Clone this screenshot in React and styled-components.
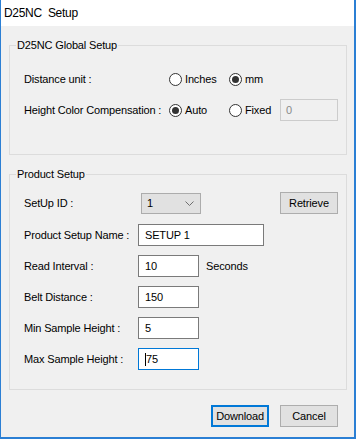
import React from "react";
import styled, { createGlobalStyle } from "styled-components";

const GlobalStyle = createGlobalStyle`
  html, body { margin: 0; padding: 0; background: #f0f0f0; }
  * { box-sizing: border-box; }
`;

const Win = styled.div`
  width: 356px;
  height: 439px;
  display: flex;
  flex-direction: column;
  border-left: 1px solid #2b7fd4;
  border-right: 2px solid #2b7fd4;
  border-bottom: 2px solid #2b7fd4;
  font-family: "Liberation Sans", Arial, sans-serif;
  font-size: 11px;
  letter-spacing: -0.15px;
  color: #000;
`;

const TitleBar = styled.div`
  height: 26px;
  flex: none;
  background: #fff;
  display: flex;
  align-items: center;
  padding-left: 3px;
  font-size: 12px;
  letter-spacing: -0.3px;
  white-space: pre;
`;

const Body = styled.div`
  flex: 1;
  background: #f0f0f0;
  padding: 19px 7px 0 8px;
  display: flex;
  flex-direction: column;
`;

const Group = styled.div`
  position: relative;
  border: 1px solid #dcdcdc;
  padding: ${(p) => p.$pad};
  margin-top: ${(p) => p.$mt || 0}px;
  display: flex;
  flex-direction: column;
`;

const Legend = styled.span`
  position: absolute;
  top: -7px;
  left: 6px;
  line-height: 13px;
  padding: 0 1px;
  background: #f0f0f0;
`;

const Row = styled.div`
  display: flex;
  align-items: center;
  height: 22px;
  margin-top: ${(p) => p.$mt || 0}px;
`;

const Label = styled.span`
  width: ${(p) => p.$w}px;
  flex: none;
  white-space: nowrap;
`;

const Option = styled.span`
  display: flex;
  align-items: center;
  width: ${(p) => p.$w}px;
  flex: none;
`;

const Circle = styled.span`
  width: 13px;
  height: 13px;
  margin: 0 3px 0 1px;
  border-radius: 50%;
  border: 1px solid #333;
  background: #fff;
  display: flex;
  align-items: center;
  justify-content: center;
  &::after {
    content: "";
    display: ${(p) => (p.$on ? "block" : "none")};
    width: 7px;
    height: 7px;
    border-radius: 50%;
    background: #333;
  }
`;

const TextBox = styled.div`
  width: ${(p) => p.$w}px;
  height: 22px;
  flex: none;
  border: 1px solid ${(p) => (p.$focus ? "#0078d7" : p.$disabled ? "#cccccc" : "#7a7a7a")};
  background: ${(p) => (p.$disabled ? "#f0f0f0" : "#fff")};
  color: ${(p) => (p.$disabled ? "#8a8a8a" : "#000")};
  padding-left: ${(p) => (p.$disabled ? 5 : 6)}px;
  display: flex;
  align-items: center;
  white-space: pre;
`;

const Caret = styled.span`
  width: 1px;
  height: 13px;
  background: #000;
`;

const Select = styled.div`
  width: 60px;
  height: 21px;
  margin-left: 3px;
  flex: none;
  border: 1px solid #acacac;
  background: #e1e1e1;
  display: flex;
  align-items: center;
  justify-content: space-between;
  padding: 0 6px 0 5px;
`;

const Button = styled.div`
  width: 58px;
  height: 22px;
  flex: none;
  margin-left: ${(p) => p.$ml || 0}px;
  display: flex;
  align-items: center;
  justify-content: center;
  background: #e1e1e1;
  border: ${(p) => (p.$def ? "2px solid #0078d7" : "1px solid #adadad")};
`;

const Unit = styled.span`
  margin-left: 7px;
`;

const Footer = styled.div`
  display: flex;
  justify-content: flex-end;
  gap: 11px;
  margin-top: 15px;
  padding-right: 9px;
`;

const Chevron = () => (
  <svg width="9" height="5" viewBox="0 0 9 5">
    <polyline points="0.5,0.5 4.5,4.5 8.5,0.5" fill="none" stroke="#6e6e6e" strokeWidth="1" />
  </svg>
);

const Radio = ({ w, on, children }) => (
  <Option $w={w}>
    <Circle $on={on} />
    {children}
  </Option>
);

export default function App() {
  return (
    <>
      <GlobalStyle />
      <Win>
        <TitleBar>D25NC  Setup</TitleBar>
        <Body>
          <Group $pad="22px 0 33px 14px">
            <Legend>D25NC Global Setup</Legend>
            <Row>
              <Label $w={144}>Distance unit :</Label>
              <Radio w={60}>Inches</Radio>
              <Radio w={52} on>mm</Radio>
            </Row>
            <Row $mt={9}>
              <Label $w={144}>Height Color Compensation :</Label>
              <Radio w={60} on>Auto</Radio>
              <Radio w={52}>Fixed</Radio>
              <TextBox $w={58} $disabled>0</TextBox>
            </Row>
          </Group>

          <Group $pad="17px 0 19px 14px" $mt={19}>
            <Legend>Product Setup</Legend>
            <Row>
              <Label $w={114}>SetUp ID :</Label>
              <Select>
                <span>1</span>
                <Chevron />
              </Select>
              <Button $ml={79}>Retrieve</Button>
            </Row>
            <Row $mt={10}>
              <Label $w={114}>Product Setup Name :</Label>
              <TextBox $w={126}>SETUP 1</TextBox>
            </Row>
            <Row $mt={9}>
              <Label $w={114}>Read Interval :</Label>
              <TextBox $w={61}>10</TextBox>
              <Unit>Seconds</Unit>
            </Row>
            <Row $mt={9}>
              <Label $w={114}>Belt Distance :</Label>
              <TextBox $w={61}>150</TextBox>
            </Row>
            <Row $mt={9}>
              <Label $w={114}>Min Sample Height :</Label>
              <TextBox $w={61}>5</TextBox>
            </Row>
            <Row $mt={9}>
              <Label $w={114}>Max Sample Height :</Label>
              <TextBox $w={61} $focus>
                <Caret />
                75
              </TextBox>
            </Row>
          </Group>

          <Footer>
            <Button $def>Download</Button>
            <Button>Cancel</Button>
          </Footer>
        </Body>
      </Win>
    </>
  );
}
